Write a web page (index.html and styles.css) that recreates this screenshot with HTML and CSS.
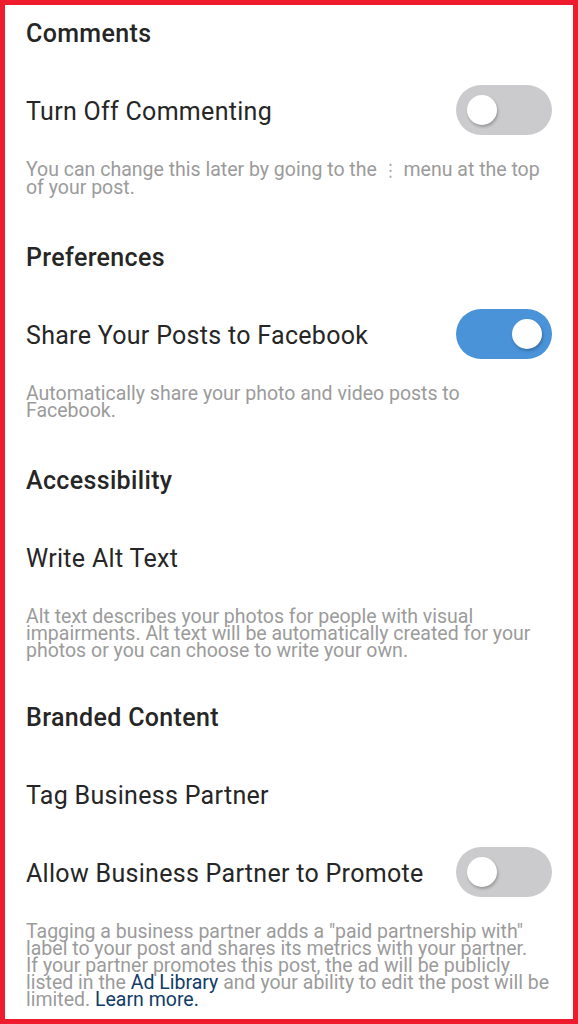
FILE: index.html
```html
<!DOCTYPE html>
<html lang="en">
<head>
    <meta charset="UTF-8">
    <meta name="viewport" content="width=device-width, initial-scale=1.0">
    <title>Advanced Settings</title>
    <link rel="stylesheet" href="styles.css">
</head>
<body>
    <div class="frame">
        <h2 class="section-title">Comments</h2>
        <div class="setting">
            <span class="setting-label">Turn Off Commenting</span>
            <span class="switch"><span class="knob"></span></span>
        </div>
        <p class="hint">You can change this later by going to the <span class="dots">⋮</span> menu at the top<br>of your post.</p>

        <h2 class="section-title">Preferences</h2>
        <div class="setting">
            <span class="setting-label">Share Your Posts to Facebook</span>
            <span class="switch on"><span class="knob"></span></span>
        </div>
        <p class="hint">Automatically share your photo and video posts to<br>Facebook.</p>

        <h2 class="section-title">Accessibility</h2>
        <div class="setting">
            <span class="setting-label">Write Alt Text</span>
        </div>
        <p class="hint">Alt text describes your photos for people with visual<br>impairments. Alt text will be automatically created for your<br>photos or you can choose to write your own.</p>

        <h2 class="section-title branded">Branded Content</h2>
        <div class="setting">
            <span class="setting-label">Tag Business Partner</span>
        </div>
        <div class="setting">
            <span class="setting-label">Allow Business Partner to Promote</span>
            <span class="switch"><span class="knob"></span></span>
        </div>
        <p class="hint">Tagging a business partner adds a "paid partnership with"<br>label to your post and shares its metrics with your partner.<br>If your partner promotes this post, the ad will be publicly<br>listed in the <a href="#">Ad Library</a> and your ability to edit the post will be<br>limited. <a href="#">Learn more.</a></p>
    </div>
</body>
</html>
```

FILE: styles.css
```css
body {
    margin: 0;
    font-family: Roboto, "Liberation Sans", sans-serif;
    background-color: #fff;
}

.frame {
    box-sizing: border-box;
    width: 578px;
    height: 1024px;
    border: 5px solid #ee1b2d;
    padding: 0 21px;
    overflow: hidden;
}

.section-title {
    display: flex;
    align-items: center;
    height: 56px;
    margin: 0 0 10px;
    font-size: 25px;
    font-weight: 500;
    letter-spacing: 0.35px;
    color: #262626;
}

.hint + .section-title {
    margin-top: 33px;
}

.hint + .section-title.branded {
    margin-top: 30px;
}

.setting {
    display: flex;
    align-items: center;
    justify-content: space-between;
    height: 78px;
}

.setting-label {
    padding-top: 2px;
    font-size: 25px;
    letter-spacing: 0.3px;
    color: #262626;
}

.switch {
    position: relative;
    width: 96px;
    height: 50px;
    border-radius: 25px;
    background-color: #cbcbcd;
    flex-shrink: 0;
}

.switch .knob {
    position: absolute;
    top: 10px;
    left: 11px;
    width: 30px;
    height: 30px;
    border-radius: 50%;
    background-color: #fff;
    box-shadow: 1px 2px 3px rgba(0, 0, 0, 0.25);
}

.switch.on {
    background-color: #4a93d9;
}

.switch.on .knob {
    left: auto;
    right: 10px;
}

.hint {
    margin: 12px 0 0;
    font-size: 19.5px;
    line-height: 17px;
    color: #9b9b9b;
}

.hint a {
    color: #103c68;
    text-decoration: none;
}

.dots {
    font-family: "DejaVu Sans", sans-serif;
    font-size: 17px;
    color: #aaa;
}
```
